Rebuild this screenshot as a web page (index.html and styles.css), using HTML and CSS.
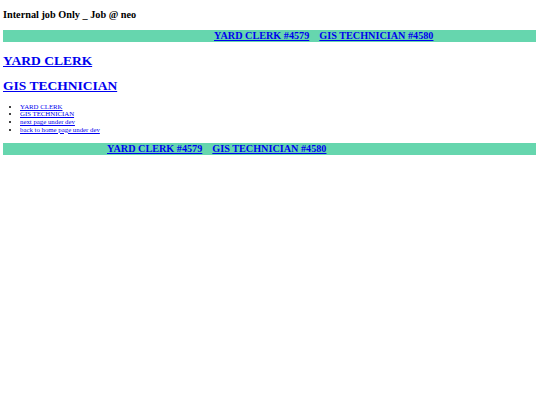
FILE: index.html
```html
<!DOCTYPE html>
<html lang="en">
<head>
<meta charset="utf-8">
<title>Internal job Only _ Job @ neo</title>
<link rel="stylesheet" href="styles.css">
</head>
<body>
<div class="page">
  <div class="title">Internal job Only _ Job @ neo</div>
  <div class="ticker">
    <div class="ticker-track ticker-track--top">
      <a href="#yard">YARD CLERK #4579</a>
      <a href="#gis">GIS TECHNICIAN #4580</a>
    </div>
  </div>
  <div class="jobs">
    <h1 class="job"><a href="#yard">YARD CLERK</a></h1>
    <h1 class="job"><a href="#gis">GIS TECHNICIAN</a></h1>
  </div>
  <ul class="menu">
    <li><a href="#yard">YARD CLERK</a></li>
    <li><a href="#gis">GIS TECHNICIAN</a></li>
    <li><a href="#next">next page under dev</a></li>
    <li><a href="#home">back to home page under dev</a></li>
  </ul>
  <div class="ticker">
    <div class="ticker-track ticker-track--bottom">
      <a href="#yard">YARD CLERK #4579</a>
      <a href="#gis">GIS TECHNICIAN #4580</a>
    </div>
  </div>
</div>
</body>
</html>
```

FILE: styles.css
```css
html, body {
  margin: 0;
  padding: 0;
  background: #ffffff;
}

body {
  font-family: "Liberation Serif", "Times New Roman", serif;
  color: #000000;
}

a {
  color: #0000ee;
  text-decoration: underline;
}

.page {
  padding: 8.5px 4px 4px 3px;
}

.title {
  font-size: 10.25px;
  font-weight: bold;
  line-height: 11.5px;
  margin: 0 0 10px 0;
}

.ticker {
  background: #66d6ae;
  height: 11.5px;
  overflow: hidden;
}

.ticker-track {
  display: flex;
  gap: 10px;
  font-size: 10.2px;
  font-weight: bold;
  line-height: 11.5px;
  white-space: nowrap;
}

.ticker-track--top {
  padding-left: 211px;
}

.ticker-track--bottom {
  padding-left: 104px;
}

.jobs {
  display: flex;
  flex-direction: column;
  gap: 9.6px;
  margin: 11.5px 0 9.3px 0;
}

.job {
  font-size: 13.5px;
  font-weight: bold;
  line-height: 15.4px;
  margin: 0;
}

.menu {
  font-size: 6.8px;
  line-height: 7.67px;
  margin: 0 0 10px 0;
  padding-left: 17px;
}
```
